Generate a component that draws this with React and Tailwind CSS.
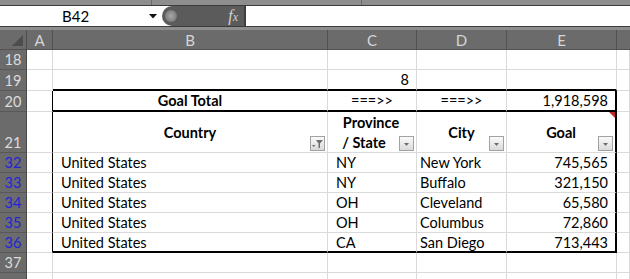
import React from "react";

const GRID = "grid grid-cols-[27px_26px_275px_89px_90px_110px_13px]";
const CELL = "flex items-center pt-[2px] border-r border-b border-[#dadada] whitespace-nowrap overflow-hidden";

function RowHead({ n, blue, bottom }) {
  return (
    <div
      className={
        "flex justify-center bg-[#6b6b6b] border-b border-r border-b-[#585858] border-r-[#4a4a4a] " +
        (bottom ? "items-end pb-[2px] " : "items-center pt-[2px] ") +
        (blue ? "text-[#2424d6]" : "text-[#dcdcdc]")
      }
    >
      {n}
    </div>
  );
}

function Tri() {
  return <polygon points="4,6 9,6 6.5,9" fill="#6e6e6e" />;
}

function FilterBtn({ funnel }) {
  return (
    <div className="absolute right-[2px] bottom-[1px] w-[15px] h-[15px] border border-[#a2a2a2] bg-linear-to-b from-[#fafafa] to-[#dadada]">
      <svg width="13" height="13" viewBox="0 0 13 13" className="block">
        {funnel ? (
          <>
            <polygon points="5,3 12,3 9,6.5 9,10.5 7.5,11.5 7.5,6.5" fill="#6e6e6e" />
            <polygon points="1,8 4.5,8 2.75,10" fill="#6e6e6e" />
          </>
        ) : (
          <Tri />
        )}
      </svg>
    </div>
  );
}

const data = [
  [32, "United States", "NY", "New York", "745,565"],
  [33, "United States", "NY", "Buffalo", "321,150"],
  [34, "United States", "OH", "Cleveland", "65,580"],
  [35, "United States", "OH", "Columbus", "72,860"],
  [36, "United States", "CA", "San Diego", "713,443"],
];

export default function App() {
  return (
    <div className="w-[630px] h-[279px] overflow-hidden bg-white font-[family-name:Lato] text-[14.5px] text-black leading-none">
      {/* top strip */}
      <div className="flex h-[6px] bg-[#8e8e8e] border-b border-[#3c3c3c]">
        <div className="w-[152px] border-r border-[#6a6a6a]" />
        <div className="w-[210px] border-r border-[#6a6a6a]" />
        <div className="flex-1" />
      </div>
      {/* formula bar */}
      <div className="flex h-[20px] bg-white">
        <div className="relative w-[162px] flex items-center pl-[62px] text-[15px]">
          <span>B42</span>
          <svg width="8" height="5" viewBox="0 0 8 5" className="absolute left-[149px] top-[8px]">
            <polygon points="0,0 8,0 4,4.5" fill="#111" />
          </svg>
        </div>
        <div className="w-[84px] flex items-center bg-[#5b5b5b] rounded-l-[10px] border-r-2 border-[#3e3e3e]">
          <div className="ml-[3px] w-[12px] h-[12px] rounded-full bg-radial from-[#a8a8a8] to-[#6c6c6c]" />
          <span className="ml-auto mr-[6px] font-[family-name:'Liberation_Serif'] italic text-[16px] text-[#d4d4d4]">
            f<span className="text-[12px]">x</span>
          </span>
        </div>
        <div className="flex-1 bg-white" />
      </div>
      <div className="h-[4px] bg-[#8e8e8e] border-t border-[#3c3c3c]" />

      {/* column headers */}
      <div className={GRID + " h-[20px] bg-[#6b6b6b] text-[#d6d6d6] text-[15px] border-b border-[#525252]"}>
        <div className="relative border-r border-[#4e4e4e]">
          <svg width="11" height="11" viewBox="0 0 11 11" className="absolute right-[3px] bottom-[3px]">
            <polygon points="11,0 11,11 0,11" fill="#4c4c4c" />
          </svg>
        </div>
        <div className="flex items-center justify-center pt-[1px] border-r border-[#525252]">A</div>
        <div className="flex items-center justify-center pt-[1px] border-r border-[#525252]">B</div>
        <div className="flex items-center justify-center pt-[1px] border-r border-[#525252]">C</div>
        <div className="flex items-center justify-center pt-[1px] border-r border-[#525252]">D</div>
        <div className="flex items-center justify-center pt-[1px] border-r border-[#525252]">E</div>
        <div className="" />
      </div>

      {/* row 18 */}
      <div className={GRID + " h-[20px]"}>
        <RowHead n={18} />
        <div className={CELL} />
        <div className={CELL} />
        <div className={CELL} />
        <div className={CELL} />
        <div className={CELL} />
        <div className={CELL} />
      </div>
      {/* row 19 */}
      <div className={GRID + " h-[21px]"}>
        <RowHead n={19} />
        <div className={CELL} />
        <div className={CELL + " border-b-2 border-b-black"} />
        <div className={CELL + " justify-end pr-[7px] border-b-2 border-b-black"}>8</div>
        <div className={CELL + " border-b-2 border-b-black"} />
        <div className={CELL + " border-b-2 border-b-black"} />
        <div className={CELL} />
      </div>
      {/* row 20 */}
      <div className={GRID + " h-[21px]"}>
        <RowHead n={20} />
        <div className={CELL + " border-r-black"} />
        <div className={CELL + " justify-center font-bold border-b-2 border-b-black"}>Goal Total</div>
        <div className={CELL + " justify-center border-b-2 border-b-black"}>===&gt;&gt;</div>
        <div className={CELL + " justify-center border-b-2 border-b-black"}>===&gt;&gt;</div>
        <div className={CELL + " justify-end pr-[7px] border-b-2 border-b-black border-r-2 border-r-black"}>1,918,598</div>
        <div className={CELL} />
      </div>
      {/* row 21 */}
      <div className={GRID + " h-[41px]"}>
        <RowHead n={21} bottom />
        <div className={CELL + " border-r-black"} />
        <div className={CELL + " relative justify-center font-bold"}>
          Country
          <FilterBtn funnel />
        </div>
        <div className={CELL + " relative justify-center font-bold"}>
          <div className="flex flex-col items-center gap-[6px] pr-[2px]">
            <span>Province</span>
            <span className="pr-[14px]">/ State</span>
          </div>
          <FilterBtn />
        </div>
        <div className={CELL + " relative justify-center font-bold"}>
          City
          <FilterBtn />
        </div>
        <div className={CELL + " relative justify-center font-bold border-r-2 border-r-black"}>
          Goal
          <FilterBtn />
          <svg width="6" height="6" viewBox="0 0 6 6" className="absolute right-0 top-0">
            <polygon points="0,0 6,0 6,6" fill="#c0282d" />
          </svg>
        </div>
        <div className={CELL} />
      </div>
      {/* data rows */}
      {data.map(([n, b, c, d, e], i) => {
        const last = i === data.length - 1;
        const bb = last ? " border-b-2 border-b-black" : "";
        return (
          <div key={n} className={GRID + " h-[20px]"}>
            <RowHead n={n} blue />
            <div className={CELL + " border-r-black"} />
            <div className={CELL + " pl-[8px]" + bb}>{b}</div>
            <div className={CELL + " pl-[8px]" + bb}>{c}</div>
            <div className={CELL + " pl-[3px]" + bb}>{d}</div>
            <div className={CELL + " justify-end pr-[7px] border-r-2 border-r-black" + bb}>{e}</div>
            <div className={CELL} />
          </div>
        );
      })}
      {/* row 37, 38 */}
      {[37, null].map((n, i) => (
        <div key={i} className={GRID + " h-[20px]"}>
          <RowHead n={n} />
          <div className={CELL} />
          <div className={CELL} />
          <div className={CELL} />
          <div className={CELL} />
          <div className={CELL} />
          <div className={CELL} />
        </div>
      ))}
    </div>
  );
}
